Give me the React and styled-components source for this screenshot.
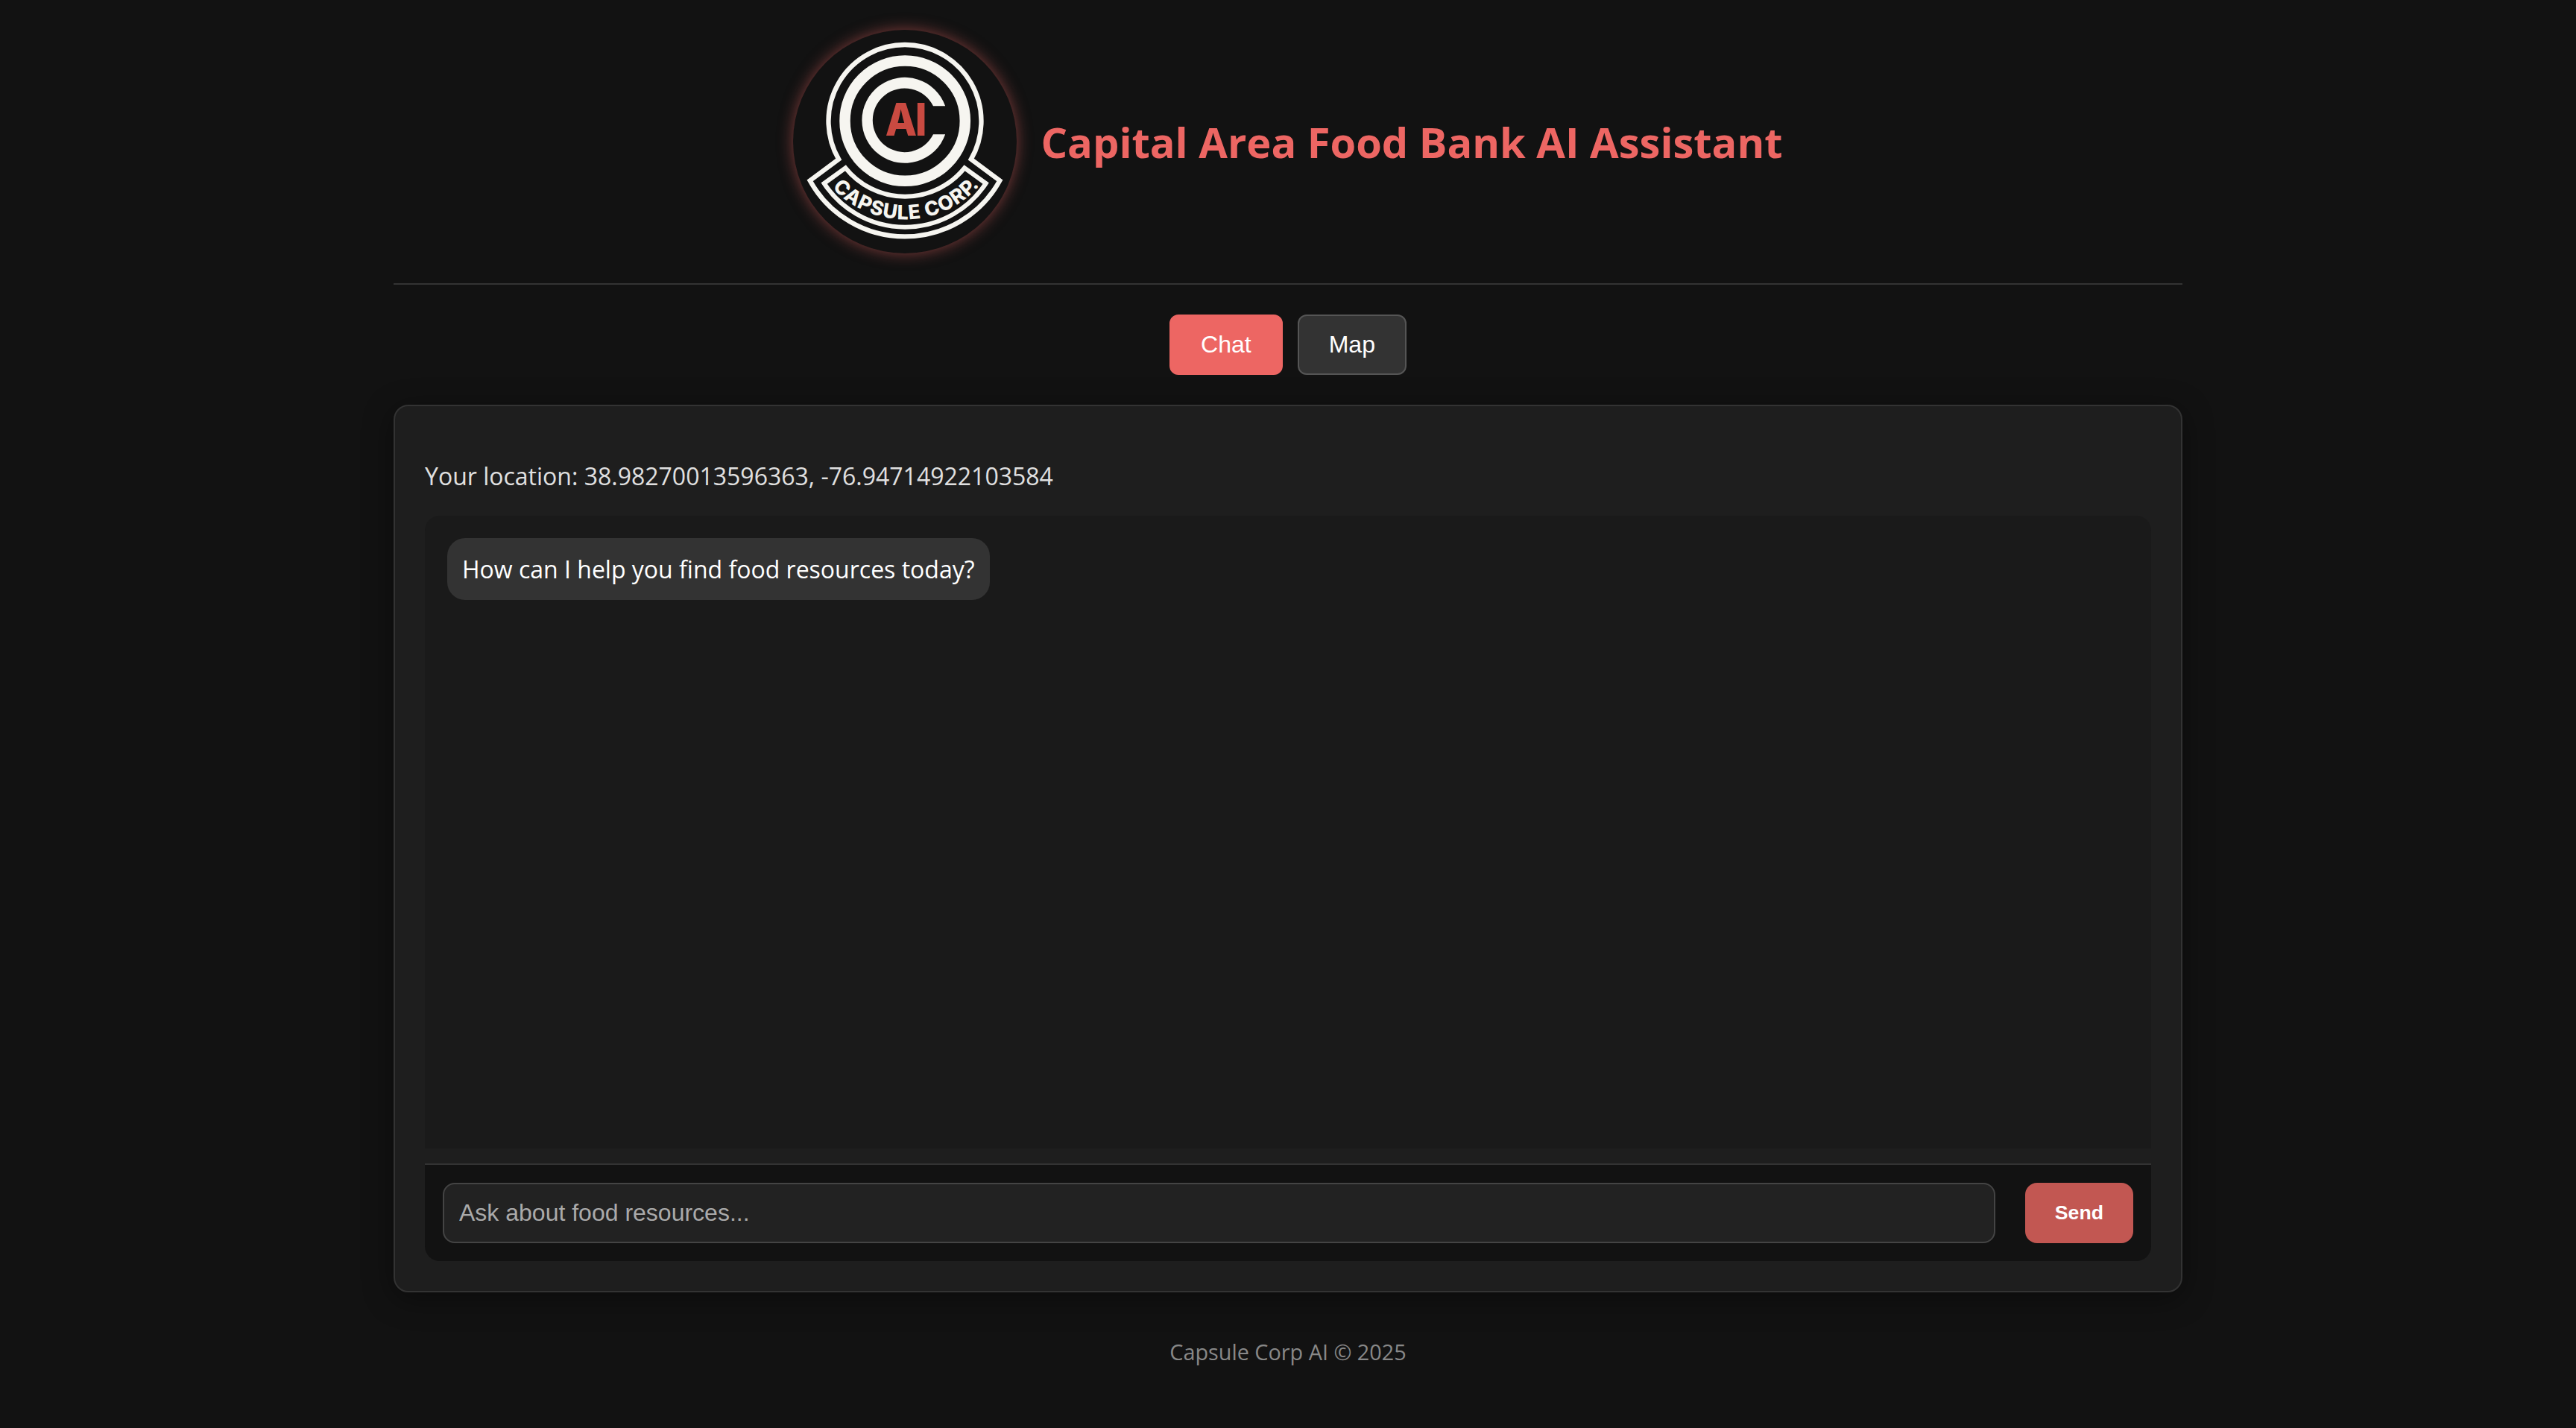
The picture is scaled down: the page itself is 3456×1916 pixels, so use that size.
import React from "react";
import styled, { createGlobalStyle } from "styled-components";

const GlobalStyle = createGlobalStyle`
  * { box-sizing: border-box; }
  html, body { margin: 0; background: #121212; }
  body { color: #e0e0e0; font-family: "Open Sans", sans-serif; font-size: 32px; }
`;

const Page = styled.div`
  width: 2400px;
  min-height: 1916px;
  margin: 0 auto;
  padding-top: 40px;
  display: flex;
  flex-direction: column;
`;

const Header = styled.header`
  display: flex;
  align-items: center;
  justify-content: center;
  gap: 32px;
  padding-bottom: 40px;
  border-bottom: 2px solid #333;
`;

const LogoBadge = styled.div`
  width: 300px;
  height: 300px;
  border-radius: 50%;
  background: #121212;
  box-shadow: 0 0 20px rgba(237, 102, 99, 0.5);
  svg { display: block; }
`;

const Title = styled.h1`
  margin: 0;
  color: #ed6663;
  font-size: 56px;
  font-weight: 700;
  white-space: nowrap;
`;

const Tabs = styled.nav`
  display: flex;
  justify-content: center;
  gap: 20px;
  margin: 40px 0;
`;

const Tab = styled.button`
  height: 81px;
  padding: 0 40px;
  border: 2px solid ${(p) => (p.$active ? "#ed6663" : "#555")};
  border-radius: 12px;
  background: ${(p) => (p.$active ? "#ed6663" : "#333")};
  color: #fff;
  font: 32px "Liberation Sans", Arial, sans-serif;
`;

const Panel = styled.main`
  padding: 40px;
  border: 2px solid #333;
  border-radius: 20px;
  background: #1e1e1e;
  box-shadow: 0 8px 40px rgba(0, 0, 0, 0.4);
`;

const Location = styled.p`
  margin: 32px 0 31px;
  line-height: 44px;
`;

const Messages = styled.section`
  display: flex;
  flex-direction: column;
  align-items: flex-start;
  height: 849px;
  padding: 30px;
  border-radius: 20px 20px 0 0;
  background: #1a1a1a;
`;

const Bubble = styled.div`
  height: 83px;
  padding: 20px;
  border-radius: 24px;
  background: #333;
  color: #fff;
`;

const Composer = styled.form`
  display: flex;
  gap: 40px;
  margin-top: 20px;
  padding: 24px;
  border-top: 2px solid #333;
  border-radius: 0 0 20px 20px;
  background: #121212;
`;

const Field = styled.input`
  flex: 1;
  min-width: 0;
  height: 81px;
  padding: 0 20px;
  border: 2px solid #444;
  border-radius: 16px;
  background: #222;
  color: #fff;
  font: 32px "Liberation Sans", Arial, sans-serif;
  &::placeholder { color: #aaa; opacity: 1; }
`;

const SendButton = styled.button`
  height: 81px;
  padding: 0 40px;
  border: 0;
  border-radius: 16px;
  background: #c25752;
  color: #fff;
  font: bold 26.67px "Liberation Sans", Arial, sans-serif;
`;

const Footer = styled.footer`
  margin-top: 60px;
  color: #888;
  font-size: 28.8px;
  text-align: center;
`;

function Logo() {
  return (
    <svg width="300" height="300" viewBox="72 60 900 900" fill="none" stroke="#f6f5f0">
      <path
        d="M255.500 581 A307.500 307.500 0 1 1 788.500 581 L904 667 A436.600 436.600 0 0 1 140 667 Z"
        strokeWidth="19"
      />
      <path
        d="M283 616 A307 307 0 0 0 762 616 L848 678 A389 389 0 0 1 197 678 Z"
        strokeWidth="18"
      />
      <circle cx="522.500" cy="426.500" r="242" strokeWidth="43.500" />
      <path
        d="M684.500 367 A172.500 172.500 0 1 0 684.500 481 H636 A128.500 128.500 0 1 1 636 367 Z"
        fill="#f6f5f0"
        stroke="none"
      />
      <text
        transform="translate(443 486) scale(0.92 1)"
        fill="#c94a41"
        stroke="none"
        fontFamily="Inter, sans-serif"
        fontWeight="800"
        fontSize="180"
        letterSpacing="-8"
      >
        AI
      </text>
      <path id="banner" d="M123 424 A399 399 0 0 0 921 424" stroke="none" />
      <text
        fill="#f6f5f0"
        stroke="none"
        fontFamily="Inter, sans-serif"
        fontWeight="800"
        fontSize="80"
        letterSpacing="3"
        textAnchor="middle"
        dx="0 0 0 0 0 0 0 0 0 0 0 0 -13"
      >
        <textPath href="#banner" startOffset="633.5">CAPSULE CORP.</textPath>
      </text>
    </svg>
  );
}

export default function App() {
  return (
    <>
      <GlobalStyle />
      <Page>
        <Header>
          <LogoBadge>
            <Logo />
          </LogoBadge>
          <Title>Capital Area Food Bank AI Assistant</Title>
        </Header>
        <Tabs>
          <Tab $active>Chat</Tab>
          <Tab>Map</Tab>
        </Tabs>
        <Panel>
          <Location>Your location: 38.98270013596363, -76.94714922103584</Location>
          <Messages>
            <Bubble>How can I help you find food resources today?</Bubble>
          </Messages>
          <Composer>
            <Field placeholder="Ask about food resources..." />
            <SendButton type="button">Send</SendButton>
          </Composer>
        </Panel>
        <Footer>Capsule Corp AI © 2025</Footer>
      </Page>
    </>
  );
}
